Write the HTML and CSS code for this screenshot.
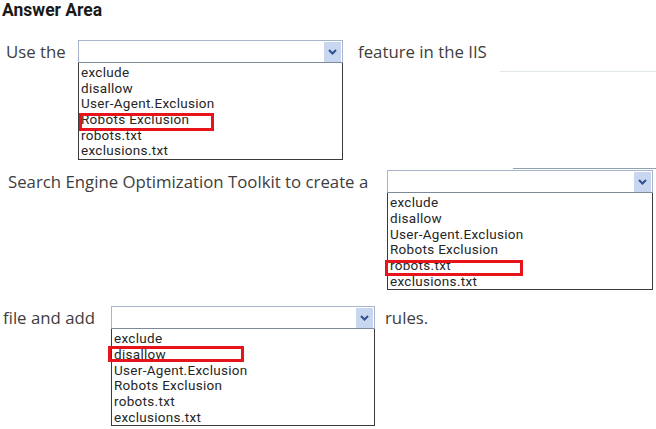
FILE: index.html
```html
<!DOCTYPE html>
<html lang="en">
<head>
    <meta charset="UTF-8">
    <title>Answer Area</title>
    <link rel="stylesheet" href="styles.css">
</head>
<body>

    <h1 class="title">Answer Area</h1>

    <!-- row 1 -->
    <div class="row row1">
        <span class="label">Use the</span>
        <div class="dropdown">
            <div class="select"><span class="arrow"><svg width="9" height="6" viewBox="0 0 9 6"><path d="M1 1 L4.5 4.5 L8 1" fill="none" stroke="#2f4f8f" stroke-width="2"/></svg></span></div>
            <ul class="list">
                <li>exclude</li>
                <li>disallow</li>
                <li>User-Agent.Exclusion</li>
                <li class="picked">Robots Exclusion</li>
                <li>robots.txt</li>
                <li>exclusions.txt</li>
            </ul>
        </div>
        <span class="label">feature in the IIS</span>
        <span class="faint faint1"></span>
    </div>

    <!-- row 2 -->
    <div class="row row2">
        <span class="label">Search Engine Optimization Toolkit to create a</span>
        <div class="dropdown">
            <span class="faint faint2"></span>
            <div class="select"><span class="arrow"><svg width="9" height="6" viewBox="0 0 9 6"><path d="M1 1 L4.5 4.5 L8 1" fill="none" stroke="#2f4f8f" stroke-width="2"/></svg></span></div>
            <ul class="list">
                <li>exclude</li>
                <li>disallow</li>
                <li>User-Agent.Exclusion</li>
                <li>Robots Exclusion</li>
                <li class="picked">robots.txt</li>
                <li>exclusions.txt</li>
            </ul>
        </div>
    </div>

    <!-- row 3 -->
    <div class="row row3">
        <span class="label">file and add</span>
        <div class="dropdown">
            <div class="select"><span class="arrow"><svg width="9" height="6" viewBox="0 0 9 6"><path d="M1 1 L4.5 4.5 L8 1" fill="none" stroke="#2f4f8f" stroke-width="2"/></svg></span></div>
            <ul class="list">
                <li>exclude</li>
                <li class="picked">disallow</li>
                <li>User-Agent.Exclusion</li>
                <li>Robots Exclusion</li>
                <li>robots.txt</li>
                <li>exclusions.txt</li>
            </ul>
        </div>
        <span class="label">rules.</span>
    </div>

</body>
</html>
```

FILE: styles.css
```css
body { margin: 0; padding: 0; background: #fff; color: #333; font-family: 'Open Sans', 'Noto Sans', sans-serif; }

.title { margin: 0; padding: 0 0 0 2px; height: 40px; font-family: Roboto, 'Open Sans', sans-serif; font-size: 17.5px; font-weight: 700; color: #1a1a1a; line-height: 21px; }

.row { display: flex; align-items: flex-start; position: relative; }
.label { font-size: 16.8px; line-height: 24px; color: #3d3d3d; white-space: nowrap; flex: none; }

.row1 { padding-left: 6px; }
.row1 .label:first-child { width: 72px; }
.row1 .dropdown { width: 265px; margin-right: 15px; }
.row2 { padding-left: 8px; margin-top: 10px; }
.row2 .label:first-child { width: 379px; }
.row2 .dropdown { width: 266px; }
.row3 { padding-left: 3px; margin-top: 16px; }
.row3 .label:first-child { width: 108px; }
.row3 .dropdown { width: 264px; margin-right: 10px; }

.dropdown { position: relative; flex: none; }
.select {
    box-sizing: border-box;
    height: 23px;
    border: 1px solid #a6b5cb;
    border-bottom-color: #7c8a9c;
    background: #fff;
    display: flex;
    justify-content: flex-end;
    align-items: center;
    padding-right: 1px;
}
.arrow { width: 17px; height: 20px; background: #c8d7ef; display: flex; align-items: center; justify-content: center; }

.list {
    list-style: none;
    margin: 0;
    padding: 2px 0 0 1px;
    border: 1px solid #3b3b3b;
    border-top: none;
    font-family: Roboto, 'Open Sans', sans-serif;
    font-size: 13.5px;
    line-height: 15.7px;
    letter-spacing: 0.3px;
    color: #262626;
}
.list li { position: relative; padding-left: 1px; height: 15.7px; white-space: nowrap; }

/* red answer marker */
.list li.picked::after {
    content: "";
    position: absolute;
    left: -1px;
    top: 1px;
    width: 129px;
    height: 12px;
    border: 3px solid #e8141c;
}
.row2 .list li.picked::after { top: 2px; left: -4px; width: 132px; height: 10px; }
.row3 .list li.picked::after { top: -1px; left: -5px; width: 130px; height: 10px; }

.faint { position: absolute; display: block; }
.faint1 { left: 500px; right: 0; top: 31px; height: 1px; background: #dfe7ea; }
.faint2 { left: 126px; right: -3px; top: -2px; height: 1px; background: #8fa0b0; }
```
